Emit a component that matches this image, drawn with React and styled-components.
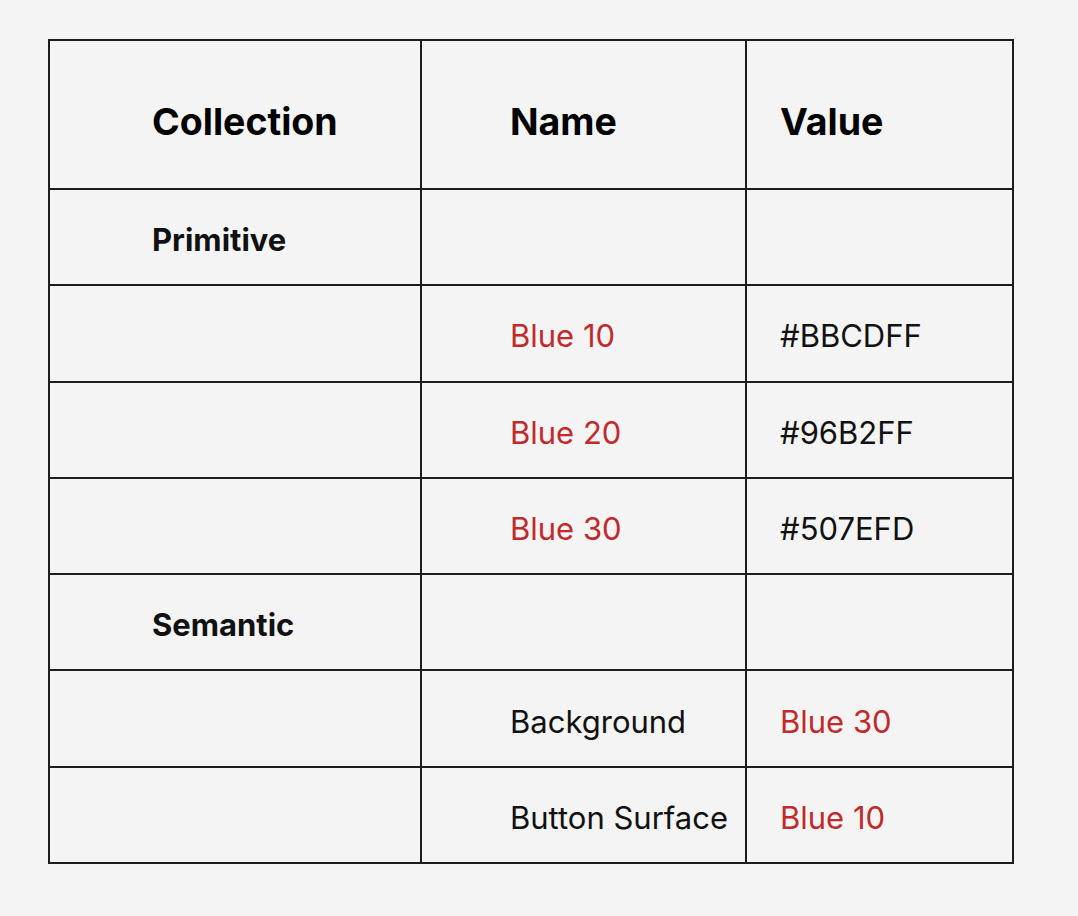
import React from "react";
import styled, { createGlobalStyle } from "styled-components";

const GlobalStyle = createGlobalStyle`
  body {
    margin: 0;
    background: #f4f4f4;
    font-family: Inter, "Noto Sans", sans-serif;
  }
`;

const Page = styled.div`
  padding: 39px 0 0 48px;
  min-height: 916px;
  box-sizing: border-box;
`;

const Table = styled.table`
  border-collapse: collapse;
  table-layout: fixed;
  width: 964px;
  border: 2px solid #1c1c1c;
`;

const Col = styled.col`
  width: ${(p) => p.$w}px;
`;

const HeadCell = styled.th`
  height: 149px;
  padding: 14px 0 0 ${(p) => p.$pad}px;
  border: 2px solid #1c1c1c;
  text-align: left;
  font-size: 37.5px;
  font-weight: 700;
  color: #000;
  box-sizing: border-box;
`;

const Cell = styled.td`
  height: 96.3px;
  padding: 5px 0 0 ${(p) => p.$pad}px;
  border: 2px solid #1c1c1c;
  font-size: 31px;
  font-weight: ${(p) => (p.$group ? 700 : 400)};
  color: ${(p) => (p.$red ? "#c02a2a" : "#111")};
  white-space: nowrap;
  box-sizing: border-box;
`;

const pads = [102, 88, 33];

const rows = [
  { group: "Primitive" },
  { name: "Blue 10", value: "#BBCDFF", nameRed: true },
  { name: "Blue 20", value: "#96B2FF", nameRed: true },
  { name: "Blue 30", value: "#507EFD", nameRed: true },
  { group: "Semantic" },
  { name: "Background", value: "Blue 30", valueRed: true },
  { name: "Button Surface", value: "Blue 10", valueRed: true },
];

export default function App() {
  return (
    <Page>
      <GlobalStyle />
      <Table>
        <colgroup>
          <Col $w={372} />
          <Col $w={325} />
          <Col $w={267} />
        </colgroup>
        <thead>
          <tr>
            <HeadCell $pad={pads[0]}>Collection</HeadCell>
            <HeadCell $pad={pads[1]}>Name</HeadCell>
            <HeadCell $pad={pads[2]}>Value</HeadCell>
          </tr>
        </thead>
        <tbody>
          {rows.map((r, i) => (
            <tr key={i}>
              <Cell $pad={pads[0]} $group>
                {r.group || ""}
              </Cell>
              <Cell $pad={pads[1]} $red={r.nameRed}>
                {r.name || ""}
              </Cell>
              <Cell $pad={pads[2]} $red={r.valueRed}>
                {r.value || ""}
              </Cell>
            </tr>
          ))}
        </tbody>
      </Table>
    </Page>
  );
}
